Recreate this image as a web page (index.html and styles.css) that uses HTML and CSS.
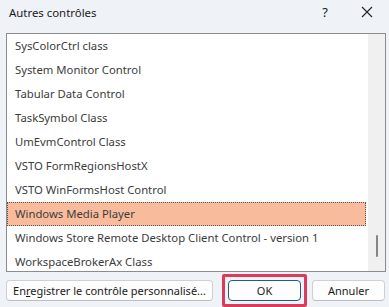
FILE: index.html
```html
<!DOCTYPE html>
<html lang="fr">
<head>
<meta charset="utf-8">
<title>Autres contrôles</title>
<link rel="stylesheet" href="styles.css">
</head>
<body>
<div class="dialog">
  <div class="titlebar">
    <span class="title">Autres contrôles</span>
    <span class="help">?</span>
    <span class="close">
      <svg width="12" height="12" viewBox="0 0 12 12"><path d="M1 1L11 11M11 1L1 11" stroke="#222" stroke-width="1.1" fill="none"/></svg>
    </span>
  </div>
  <div class="listbox">
    <div class="items">
      <div class="item">SysColorCtrl class</div>
      <div class="item">System Monitor Control</div>
      <div class="item">Tabular Data Control</div>
      <div class="item">TaskSymbol Class</div>
      <div class="item">UmEvmControl Class</div>
      <div class="item">VSTO FormRegionsHostX</div>
      <div class="item">VSTO WinFormsHost Control</div>
      <div class="item selected">Windows Media Player</div>
      <div class="item">Windows Store Remote Desktop Client Control - version 1</div>
      <div class="item">WorkspaceBrokerAx Class</div>
    </div>
    <div class="scrollbar"><div class="thumb"></div></div>
  </div>
  <div class="buttons">
    <button class="btn register">En<u>r</u>egistrer le contrôle personnalisé...</button>
    <div class="ok-wrap"><button class="btn ok">OK</button></div>
    <button class="btn cancel">Annuler</button>
  </div>
</div>
</body>
</html>
```
FILE: styles.css
```css
html, body {
  margin: 0;
  padding: 0;
}
body {
  width: 389px;
  height: 307px;
  overflow: hidden;
  font-family: "Noto Sans", "Open Sans", sans-serif;
  background: #eff2f7;
}
.dialog {
  width: 389px;
  height: 307px;
  display: flex;
  flex-direction: column;
  background: #eff2f7;
}
.titlebar {
  height: 25px;
  display: flex;
  align-items: center;
  padding-left: 9px;
  font-size: 11.4px;
  color: #1a1a1a;
}
.title {
  flex: 1;
}
.help {
  width: 20px;
  margin-right: 26px;
  font-size: 13px;
  text-align: center;
}
.close {
  width: 12px;
  margin-right: 16px;
  display: flex;
}
.listbox {
  margin: 8px 3px 0 6px;
  height: 238px;
  border: 1px solid #8c8c8c;
  background: #fff;
  display: flex;
  overflow: hidden;
}
.items {
  flex: 1;
  display: flex;
  flex-direction: column;
}
.item {
  height: 24px;
  flex: none;
  line-height: 24px;
  padding-left: 8px;
  font-size: 11.3px;
  color: #3c3c3c;
  white-space: nowrap;
  box-sizing: border-box;
}
.item.selected {
  background: #f8bc9c;
  border: 1px dotted #555;
  line-height: 22px;
  padding-left: 7px;
}
.scrollbar {
  width: 17px;
  margin-left: 2px;
  background: #f0f0f0;
  display: flex;
  flex-direction: column;
  align-items: center;
  justify-content: flex-end;
  padding-bottom: 14px;
  box-sizing: border-box;
}
.thumb {
  width: 2px;
  height: 22px;
  border-radius: 1px;
  background: #858585;
}
.buttons {
  display: flex;
  align-items: center;
  margin-top: 2px;
  padding: 0 4px 0 6px;
}
.btn {
  font-family: "Noto Sans", "Open Sans", sans-serif;
  font-size: 11px;
  color: #1a1a1a;
  background: #fdfdfd;
  border: 1px solid #d0d0d0;
  border-bottom-color: #bdbdbd;
  border-radius: 4px;
  height: 21px;
  padding: 0;
  line-height: 19px;
}
.register {
  width: 207px;
}
.ok-wrap {
  margin-left: 9px;
  border: 3px solid #dc3b5c;
  border-radius: 2px;
  padding: 3px 3px;
  display: flex;
}
.ok {
  width: 73px;
  border: 1px solid #235e79;
}
.cancel {
  width: 73px;
  margin-left: 5px;
}
```
